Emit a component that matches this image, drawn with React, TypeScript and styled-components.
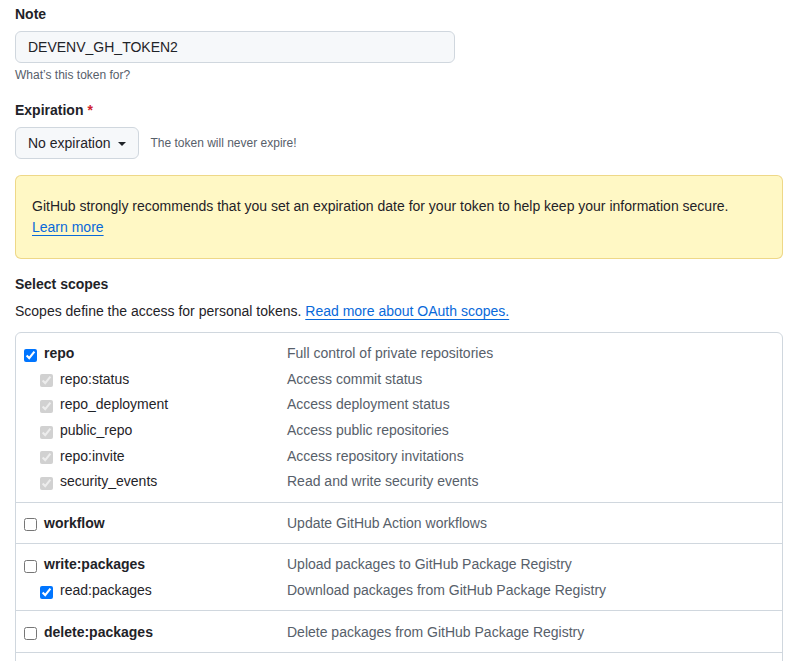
import styled, { createGlobalStyle } from 'styled-components'

const GlobalStyle = createGlobalStyle`
  html, body {
    margin: 0;
    padding: 0;
    background: #ffffff;
  }
  body {
    font-family: "Liberation Sans", Arial, Helvetica, sans-serif;
    font-size: 14px;
    color: #1f2328;
  }
`

const Page = styled.div`
  padding: 4px 23px 0 15px;
`

const FormGroup = styled.div<{ $gap?: number }>`
  margin-top: ${({ $gap }) => $gap ?? 0}px;
`

const Label = styled.div`
  font-weight: 700;
  line-height: 21px;
  margin-bottom: 6px;
`

const Required = styled.span`
  color: #cf222e;
  margin-left: 4px;
`

const TextInput = styled.input`
  box-sizing: border-box;
  width: 440px;
  height: 32px;
  padding: 0 12px;
  font-family: inherit;
  font-size: 14px;
  color: #1f2328;
  background: #f6f8fa;
  border: 1px solid #d0d7de;
  border-radius: 6px;
  outline: none;
`

const Hint = styled.div`
  margin-top: 3px;
  font-size: 12px;
  line-height: 18px;
  color: #57606a;
`

const Inline = styled.div`
  display: flex;
  align-items: center;
  gap: 12px;
`

const SelectButton = styled.button`
  box-sizing: border-box;
  height: 32px;
  padding: 0 12px;
  display: flex;
  align-items: center;
  gap: 7px;
  font-family: inherit;
  font-size: 14px;
  color: #1f2328;
  background: #f6f8fa;
  border: 1px solid #d0d7de;
  border-radius: 6px;
`

const Caret = styled.span`
  width: 0;
  height: 0;
  margin-top: 2px;
  border-top: 4px solid #1f2328;
  border-left: 4px solid transparent;
  border-right: 4px solid transparent;
`

const Note = styled.span`
  font-size: 12px;
  color: #57606a;
`

const Flash = styled.div`
  margin-top: 16px;
  padding: 20px 16px;
  background: #fff8c5;
  border: 1px solid rgba(212, 167, 44, 0.4);
  border-radius: 6px;
  line-height: 21px;
`

const Link = styled.a`
  color: #0969da;
  text-decoration: underline;
  text-underline-offset: 3px;
`

const Heading = styled.div`
  margin-top: 15px;
  font-weight: 700;
  line-height: 21px;
`

const Lead = styled.p`
  margin: 6px 0 0;
  line-height: 21px;
`

const ScopeBox = styled.div`
  margin-top: 10px;
  border: 1px solid #d0d7de;
  border-radius: 6px;
`

const Group = styled.div`
  padding: 7.5px 0;
  & + & {
    border-top: 1px solid #d0d7de;
  }
`

const Row = styled.div`
  display: grid;
  grid-template-columns: 263px 1fr;
  height: 25.6px;
  align-items: center;
  padding-left: 8px;
`

const Name = styled.label<{ $child?: boolean }>`
  display: flex;
  align-items: center;
  gap: 7px;
  padding-left: ${({ $child }) => ($child ? 16 : 0)}px;
  font-weight: ${({ $child }) => ($child ? 400 : 700)};
  color: #1f2328;
`

const Box = styled.input`
  width: 13px;
  height: 13px;
  margin: 4px 0 0;
`

const Desc = styled.span`
  color: #57606a;
`

type Scope = { name: string; desc: string; child?: boolean; checked?: boolean; disabled?: boolean }

const groups: Scope[][] = [
  [
    { name: 'repo', desc: 'Full control of private repositories', checked: true },
    { name: 'repo:status', desc: 'Access commit status', child: true, checked: true, disabled: true },
    { name: 'repo_deployment', desc: 'Access deployment status', child: true, checked: true, disabled: true },
    { name: 'public_repo', desc: 'Access public repositories', child: true, checked: true, disabled: true },
    { name: 'repo:invite', desc: 'Access repository invitations', child: true, checked: true, disabled: true },
    { name: 'security_events', desc: 'Read and write security events', child: true, checked: true, disabled: true },
  ],
  [{ name: 'workflow', desc: 'Update GitHub Action workflows' }],
  [
    { name: 'write:packages', desc: 'Upload packages to GitHub Package Registry' },
    { name: 'read:packages', desc: 'Download packages from GitHub Package Registry', child: true, checked: true },
  ],
  [{ name: 'delete:packages', desc: 'Delete packages from GitHub Package Registry' }],
  [{ name: 'admin:org', desc: 'Full control of orgs and teams, read and write org projects' }],
]

export default function App() {
  return (
    <Page>
      <GlobalStyle />
      <FormGroup>
        <Label>Note</Label>
        <TextInput defaultValue="DEVENV_GH_TOKEN2" />
        <Hint>What’s this token for?</Hint>
      </FormGroup>

      <FormGroup $gap={16}>
        <Label>
          Expiration<Required>*</Required>
        </Label>
        <Inline>
          <SelectButton>
            No expiration <Caret />
          </SelectButton>
          <Note>The token will never expire!</Note>
        </Inline>
      </FormGroup>

      <Flash>
        GitHub strongly recommends that you set an expiration date for your token to help keep your information secure.
        <br />
        <Link href="#">Learn more</Link>
      </Flash>

      <Heading>Select scopes</Heading>
      <Lead>
        Scopes define the access for personal tokens. <Link href="#">Read more about OAuth scopes.</Link>
      </Lead>

      <ScopeBox>
        {groups.map((g, i) => (
          <Group key={i}>
            {g.map((s) => (
              <Row key={s.name}>
                <Name $child={s.child}>
                  <Box type="checkbox" defaultChecked={s.checked} disabled={s.disabled} />
                  {s.name}
                </Name>
                <Desc>{s.desc}</Desc>
              </Row>
            ))}
          </Group>
        ))}
      </ScopeBox>
    </Page>
  )
}
